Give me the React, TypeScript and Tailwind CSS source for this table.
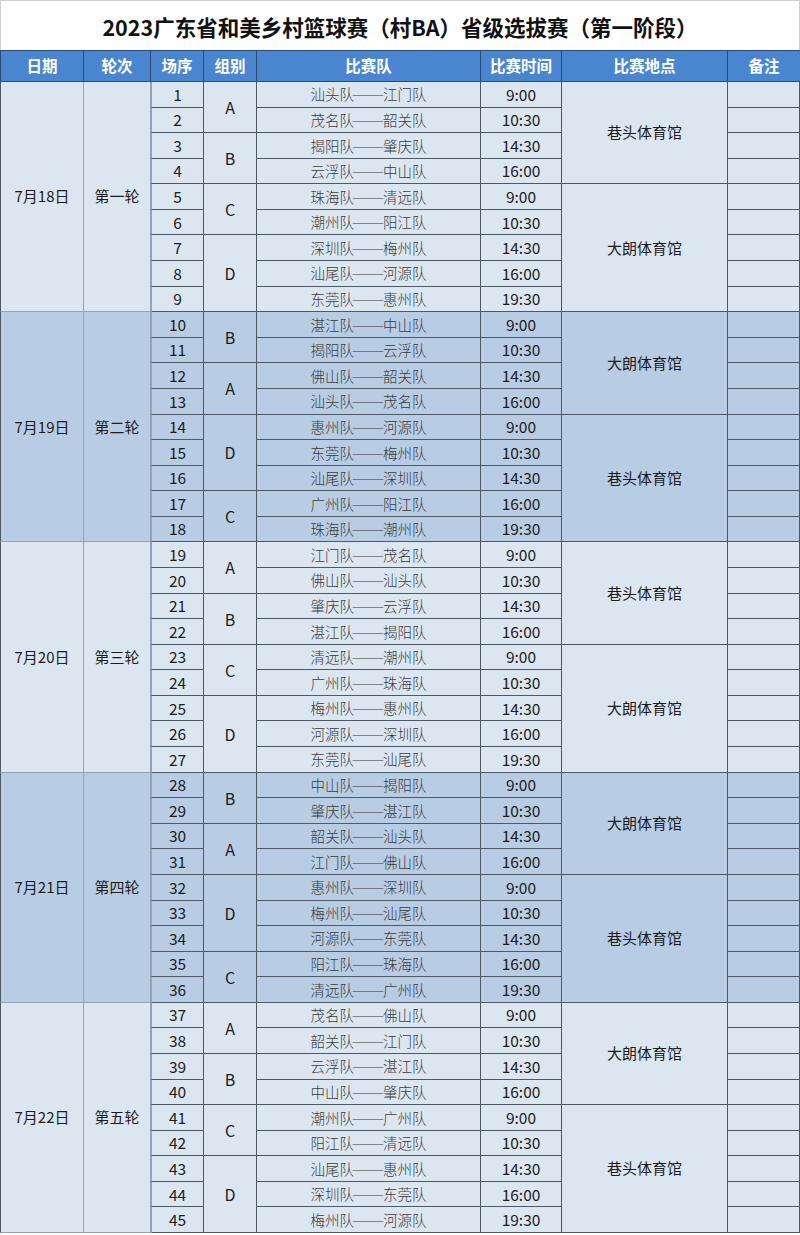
import React from 'react';

type Match = { no: number; group: string; teams: string; time: string };
type Day = {
    date: string;
    round: string;
    dark: boolean;
    matches: Match[];
    groups: { name: string; span: number }[];
    venues: { name: string; span: number }[];
};

const m = (no: number, group: string, teams: string, time: string): Match => ({ no, group, teams, time });

const days: Day[] = [
    {
        date: '7月18日', round: '第一轮', dark: false,
        matches: [
            m(1, 'A', '汕头队——江门队', '9:00'),
            m(2, 'A', '茂名队——韶关队', '10:30'),
            m(3, 'B', '揭阳队——肇庆队', '14:30'),
            m(4, 'B', '云浮队——中山队', '16:00'),
            m(5, 'C', '珠海队——清远队', '9:00'),
            m(6, 'C', '潮州队——阳江队', '10:30'),
            m(7, 'D', '深圳队——梅州队', '14:30'),
            m(8, 'D', '汕尾队——河源队', '16:00'),
            m(9, 'D', '东莞队——惠州队', '19:30'),
        ],
        groups: [{ name: 'A', span: 2 }, { name: 'B', span: 2 }, { name: 'C', span: 2 }, { name: 'D', span: 3 }],
        venues: [{ name: '巷头体育馆', span: 4 }, { name: '大朗体育馆', span: 5 }],
    },
    {
        date: '7月19日', round: '第二轮', dark: true,
        matches: [
            m(10, 'B', '湛江队——中山队', '9:00'),
            m(11, 'B', '揭阳队——云浮队', '10:30'),
            m(12, 'A', '佛山队——韶关队', '14:30'),
            m(13, 'A', '汕头队——茂名队', '16:00'),
            m(14, 'D', '惠州队——河源队', '9:00'),
            m(15, 'D', '东莞队——梅州队', '10:30'),
            m(16, 'D', '汕尾队——深圳队', '14:30'),
            m(17, 'C', '广州队——阳江队', '16:00'),
            m(18, 'C', '珠海队——潮州队', '19:30'),
        ],
        groups: [{ name: 'B', span: 2 }, { name: 'A', span: 2 }, { name: 'D', span: 3 }, { name: 'C', span: 2 }],
        venues: [{ name: '大朗体育馆', span: 4 }, { name: '巷头体育馆', span: 5 }],
    },
    {
        date: '7月20日', round: '第三轮', dark: false,
        matches: [
            m(19, 'A', '江门队——茂名队', '9:00'),
            m(20, 'A', '佛山队——汕头队', '10:30'),
            m(21, 'B', '肇庆队——云浮队', '14:30'),
            m(22, 'B', '湛江队——揭阳队', '16:00'),
            m(23, 'C', '清远队——潮州队', '9:00'),
            m(24, 'C', '广州队——珠海队', '10:30'),
            m(25, 'D', '梅州队——惠州队', '14:30'),
            m(26, 'D', '河源队——深圳队', '16:00'),
            m(27, 'D', '东莞队——汕尾队', '19:30'),
        ],
        groups: [{ name: 'A', span: 2 }, { name: 'B', span: 2 }, { name: 'C', span: 2 }, { name: 'D', span: 3 }],
        venues: [{ name: '巷头体育馆', span: 4 }, { name: '大朗体育馆', span: 5 }],
    },
    {
        date: '7月21日', round: '第四轮', dark: true,
        matches: [
            m(28, 'B', '中山队——揭阳队', '9:00'),
            m(29, 'B', '肇庆队——湛江队', '10:30'),
            m(30, 'A', '韶关队——汕头队', '14:30'),
            m(31, 'A', '江门队——佛山队', '16:00'),
            m(32, 'D', '惠州队——深圳队', '9:00'),
            m(33, 'D', '梅州队——汕尾队', '10:30'),
            m(34, 'D', '河源队——东莞队', '14:30'),
            m(35, 'C', '阳江队——珠海队', '16:00'),
            m(36, 'C', '清远队——广州队', '19:30'),
        ],
        groups: [{ name: 'B', span: 2 }, { name: 'A', span: 2 }, { name: 'D', span: 3 }, { name: 'C', span: 2 }],
        venues: [{ name: '大朗体育馆', span: 4 }, { name: '巷头体育馆', span: 5 }],
    },
    {
        date: '7月22日', round: '第五轮', dark: false,
        matches: [
            m(37, 'A', '茂名队——佛山队', '9:00'),
            m(38, 'A', '韶关队——江门队', '10:30'),
            m(39, 'B', '云浮队——湛江队', '14:30'),
            m(40, 'B', '中山队——肇庆队', '16:00'),
            m(41, 'C', '潮州队——广州队', '9:00'),
            m(42, 'C', '阳江队——清远队', '10:30'),
            m(43, 'D', '汕尾队——惠州队', '14:30'),
            m(44, 'D', '深圳队——东莞队', '16:00'),
            m(45, 'D', '梅州队——河源队', '19:30'),
        ],
        groups: [{ name: 'A', span: 2 }, { name: 'B', span: 2 }, { name: 'C', span: 2 }, { name: 'D', span: 3 }],
        venues: [{ name: '大朗体育馆', span: 4 }, { name: '巷头体育馆', span: 5 }],
    },
];

const headers = ['日期', '轮次', '场序', '组别', '比赛队', '比赛时间', '比赛地点', '备注'];

const spanClass: Record<number, string> = {
    2: 'row-span-2',
    3: 'row-span-3',
    4: 'row-span-4',
    5: 'row-span-5',
    9: 'row-span-9',
};

const cell = 'flex items-center justify-center border-b border-r border-[#4e5966]';
const soft = 'flex items-center justify-center border-b border-r border-[#93a3b6]';

// 起始行 -> 跨行数
const startsAt = (list: { name: string; span: number }[]) => {
    const map = new Map<number, { name: string; span: number }>();
    let i = 0;
    list.forEach((g) => {
        map.set(i, g);
        i += g.span;
    });
    return map;
};

// 破折号在网页字体里偏窄，横向拉长一点
const Teams = ({ text }: { text: string }) => {
    const [a, b] = text.split('——');
    return (
        <span className="flex items-center">
            {a}
            <span className="inline-block w-[29px] text-center">
                <span className="inline-block scale-x-[1.35]">——</span>
            </span>
            {b}
        </span>
    );
};

export default function App() {
    const cells: React.ReactNode[] = [];

    days.forEach((day, d) => {
        const bg = day.dark ? 'bg-[#b8cce4]' : 'bg-[#dce6f1]';
        const groupStarts = startsAt(day.groups);
        const venueStarts = startsAt(day.venues);

        day.matches.forEach((match, i) => {
            if (i === 0) {
                cells.push(
                    <div key={`date-${d}`} className={`${soft} ${bg} col-start-1 row-span-9 border-l border-l-[#4e5966] text-[15px] text-[#1c1c1c]`}>
                        {day.date}
                    </div>,
                    <div key={`round-${d}`} className={`${soft} ${bg} col-start-2 row-span-9 text-[15px] text-[#1c1c1c]`}>
                        {day.round}
                    </div>,
                );
            }
            cells.push(
                <div key={`no-${match.no}`} className={`${cell} ${bg} col-start-3 border-l border-l-[#93a3b6] text-[15.5px] text-[#1c1c1c]`}>
                    {match.no}
                </div>,
            );
            const g = groupStarts.get(i);
            if (g) {
                cells.push(
                    <div key={`g-${match.no}`} className={`${cell} ${bg} col-start-4 ${spanClass[g.span]} text-[16px] text-[#1c1c1c]`}>
                        {g.name}
                    </div>,
                );
            }
            cells.push(
                <div key={`t-${match.no}`} className={`${cell} ${bg} col-start-5 text-[14.5px] font-light text-[#3a3a3a]`}>
                    <Teams text={match.teams} />
                </div>,
                <div key={`time-${match.no}`} className={`${cell} ${bg} col-start-6 text-[15.5px] text-[#1c1c1c]`}>
                    {match.time}
                </div>,
            );
            const v = venueStarts.get(i);
            if (v) {
                cells.push(
                    <div key={`v-${match.no}`} className={`${cell} ${bg} col-start-7 ${spanClass[v.span]} text-[15px] text-[#1c1c1c]`}>
                        {v.name}
                    </div>,
                );
            }
            cells.push(
                <div key={`r-${match.no}`} className={`${cell} ${bg} col-start-8`} />,
            );
        });
    });

    return (
        <div className="w-[800px] bg-white font-['Noto_Sans_CJK_SC','Noto_Sans',sans-serif]">
            <div className="flex h-[50px] items-center justify-center border-x border-t border-[#cfcfcf] pt-[3px] text-[21.5px] font-bold text-[#111]">
                2023广东省和美乡村篮球赛（村BA）省级选拔赛（第一阶段）
            </div>
            <div className="grid h-[32px] grid-cols-[84px_67px_53px_53px_224px_81px_166px_72px] border-y border-[#2c4a74] bg-[#4a86d0]">
                {headers.map((h, i) => (
                    <div
                        key={h}
                        className={`flex items-center justify-center text-[15.5px] font-bold text-white ${i < headers.length - 1 ? 'border-r border-[#2c4a74]' : ''} ${i === 0 ? 'border-l border-[#2c4a74]' : ''}`}
                    >
                        {h}
                    </div>
                ))}
            </div>
            <div className="grid grid-cols-[84px_67px_53px_53px_224px_81px_166px_72px] grid-rows-[repeat(45,25.58px)]">
                {cells}
            </div>
        </div>
    );
}
